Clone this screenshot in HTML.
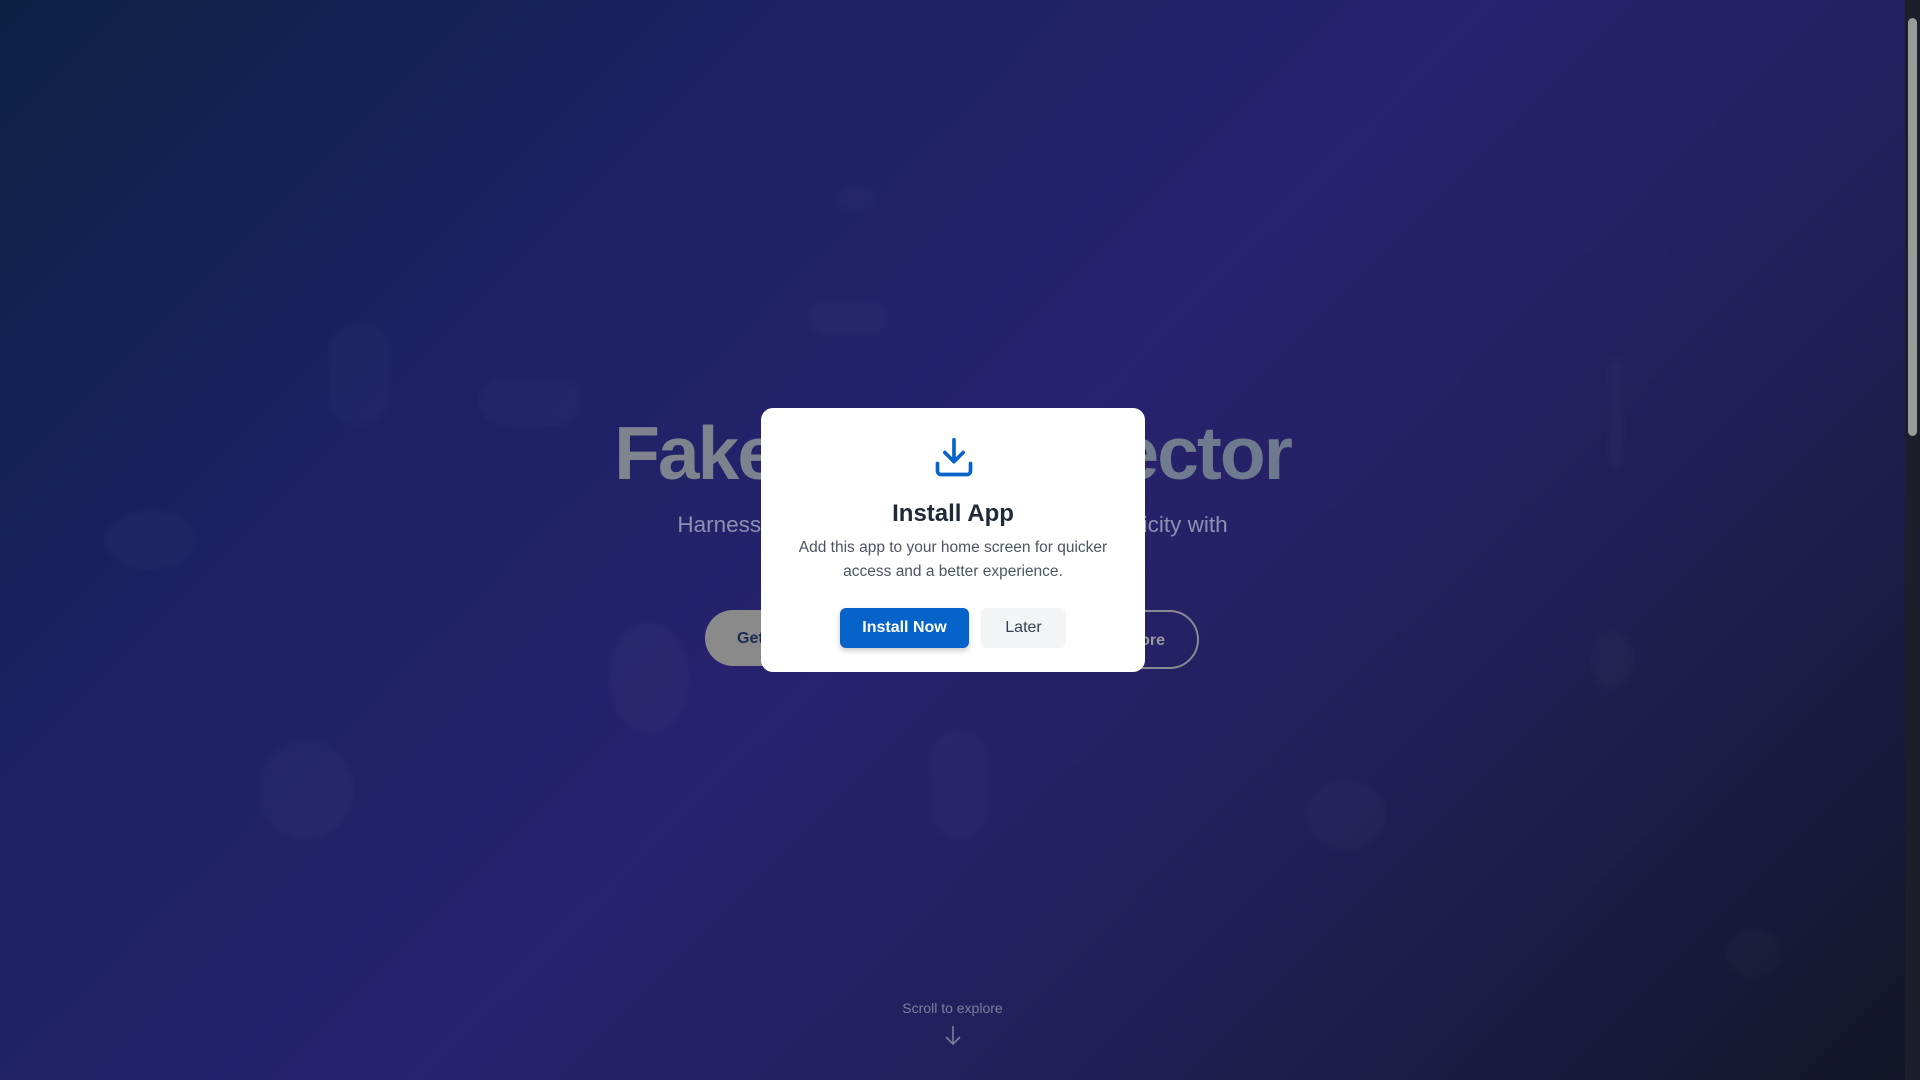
<!DOCTYPE html>
<html><head><meta charset="utf-8"><style>
*{margin:0;padding:0;box-sizing:border-box}
body{width:1920px;height:1080px;overflow:hidden;font-family:"Liberation Sans",sans-serif;position:relative;
background:linear-gradient(135deg,#0b2244 0%,#1b2262 25%,#28226f 50%,#22205a 70%,#131528 100%);}
.blob{position:absolute;background:rgba(255,255,255,0.02);border-radius:50%;filter:blur(3px)}
h1{position:absolute;left:0;width:1905px;text-align:center;top:410px;font-size:75px;font-weight:bold;letter-spacing:-2px;
background:linear-gradient(90deg,#8a8a8a 0%,#7a8090 50%,#566c8c 100%);-webkit-background-clip:text;color:transparent}
.sub{position:absolute;top:512px;width:1905px;text-align:center;font-size:22.5px;color:#8e90b0;font-weight:300}
.b1{position:absolute;left:705px;top:610px;width:220px;height:56px;border-radius:28px;background:#8a8a8a;color:#1a2a50;font-weight:bold;font-size:16px;padding:20px 32px}
.b2{position:absolute;left:990px;top:610px;width:209px;height:59px;border-radius:30px;border:2px solid #8a8890;color:#9a98a0;font-weight:bold;font-size:16px;text-align:right;padding:20px 32px}
.modal{position:absolute;left:761px;top:408px;width:384px;height:264px;background:#fff;border-radius:12px;text-align:center}
.modal h2{position:absolute;top:92px;width:100%;font-size:24px;color:#1f2937;font-weight:bold}
.modal p{position:absolute;top:128px;left:20px;right:20px;font-size:15.5px;line-height:24px;color:#4b5563}
.bi{position:absolute;left:79px;top:200px;width:129px;height:40px;background:#0563c9;color:#fff;border-radius:6px;font-weight:bold;font-size:16px;line-height:40px;box-shadow:0 3px 6px rgba(0,0,0,0.2)}
.bl{position:absolute;left:220px;top:200px;width:85px;height:40px;background:#f3f4f6;color:#374151;border-radius:6px;font-size:16px;line-height:40px}
.scroll{position:absolute;top:1000px;width:1905px;text-align:center;color:#7c7f9a;font-size:14px}
.sb{position:absolute;right:0;top:0;width:15px;height:1080px;background:#1e1e2a}
.thumb{position:absolute;right:3px;top:18px;width:9px;height:418px;background:#9a9a9a;border-radius:5px}
</style></head><body>
<div class="blob" style="left:328px;top:322px;width:62px;height:104px;border-radius:30px"></div>
<div class="blob" style="left:478px;top:378px;width:104px;height:48px;border-radius:24px"></div>
<div class="blob" style="left:104px;top:510px;width:92px;height:60px"></div>
<div class="blob" style="left:608px;top:622px;width:82px;height:112px"></div>
<div class="blob" style="left:258px;top:740px;width:96px;height:100px"></div>
<div class="blob" style="left:930px;top:730px;width:60px;height:110px;border-radius:30px"></div>
<div class="blob" style="left:1306px;top:780px;width:80px;height:70px"></div>
<div class="blob" style="left:808px;top:300px;width:80px;height:36px;border-radius:18px"></div>
<div class="blob" style="left:836px;top:184px;width:40px;height:28px"></div>
<div class="blob" style="left:1590px;top:630px;width:44px;height:60px"></div>
<div class="blob" style="left:1726px;top:928px;width:56px;height:50px"></div>
<div class="blob" style="left:1608px;top:358px;width:16px;height:110px;border-radius:8px"></div>
<h1>Fake News Detector</h1>
<div class="sub">Harness the power of AI to verify news authenticity with</div>
<div class="b1">Get Started</div>
<div class="b2">Learn More</div>
<div class="modal">
<svg style="position:absolute;left:171px;top:28px" width="44" height="44" viewBox="0 0 24 24" fill="none" stroke="#0563c9" stroke-width="2" stroke-linecap="round" stroke-linejoin="round"><path d="M12 2v12M7 9l5 5 5-5M3 15v4a2 2 0 0 0 2 2h14a2 2 0 0 0 2-2v-4"/></svg>
<h2>Install App</h2>
<p>Add this app to your home screen for quicker access and a better experience.</p>
<div class="bi">Install Now</div>
<div class="bl">Later</div>
</div>
<div class="scroll">Scroll to explore<br>
<svg style="margin-top:8px" width="20" height="22" viewBox="0 0 20 22" fill="none" stroke="#7c7f9a" stroke-width="1.6"><path d="M10 2v18M3 13l7 7 7-7"/></svg></div>
<div class="sb"><div class="thumb"></div></div>
</body></html>
